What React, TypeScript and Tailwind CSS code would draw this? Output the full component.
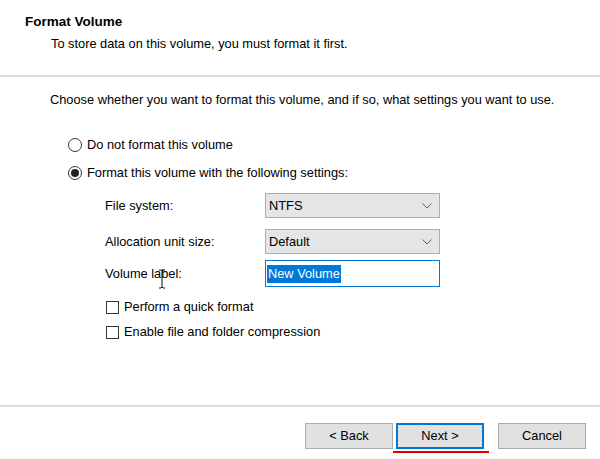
import { ReactNode } from "react";

const FONT = "font-['Liberation_Sans',Arial,sans-serif]";

const Chevron = () => (
  <svg width="10" height="6" viewBox="0 0 10 6" className="text-[#606060]">
    <path d="M0.5 0.5 L5 5 L9.5 0.5" fill="none" stroke="currentColor" strokeWidth="1" />
  </svg>
);

const Radio = ({ checked, label }: { checked?: boolean; label: string }) => (
  <div className="flex items-center h-4">
    <span className="w-[14px] h-[14px] rounded-full border border-[#333] bg-white flex items-center justify-center">
      {checked && <span className="w-[8px] h-[8px] rounded-full bg-[#222]" />}
    </span>
    <span className="ml-[5px]">{label}</span>
  </div>
);

const Checkbox = ({ label }: { label: string }) => (
  <div className="flex items-center h-4">
    <span className="w-[13px] h-[13px] border border-[#333] bg-white" />
    <span className="ml-[5px]">{label}</span>
  </div>
);

const Combo = ({ value }: { value: string }) => (
  <div className="w-[175px] h-[25px] border border-[#adadad] bg-[#e5e5e5] flex items-center justify-between pl-[3px] pr-[7px]">
    <span>{value}</span>
    <Chevron />
  </div>
);

const Row = ({ label, children }: { label: string; children: ReactNode }) => (
  <div className="flex items-center">
    <span className="w-[160px]">{label}</span>
    {children}
  </div>
);

const Button = ({ children, primary }: { children: ReactNode; primary?: boolean }) => (
  <div
    className={
      "w-[88px] h-[26px] flex items-center justify-center bg-[#e1e1e1] " +
      (primary ? "border-2 border-[#0078d7]" : "border border-[#adadad]")
    }
  >
    {children}
  </div>
);

export default function App() {
  return (
    <div className={`${FONT} w-[600px] h-[459px] bg-white text-[12.8px] text-black flex flex-col overflow-hidden`}>
      {/* HEADER */}
      <div className="h-[75px] pt-[14px] pl-[25px] leading-4">
        <div className="font-bold text-[13.5px]">Format Volume</div>
        <div className="pl-[26px] mt-[6px]">To store data on this volume, you must format it first.</div>
      </div>
      <div className="h-[2px] bg-[#dcdcdc]" />

      {/* BODY */}
      <div className="flex-1 pl-[50px] pt-[15px] leading-4 relative">
        <div>Choose whether you want to format this volume, and if so, what settings you want to use.</div>
        <div className="pl-[18px] mt-[29px] flex flex-col gap-[12px]">
          <Radio label="Do not format this volume" />
          <Radio checked label="Format this volume with the following settings:" />
        </div>
        <div className="pl-[55px] mt-[12px] flex flex-col">
          <Row label="File system:">
            <Combo value="NTFS" />
          </Row>
          <div className="mt-[11px]">
            <Row label="Allocation unit size:">
              <Combo value="Default" />
            </Row>
          </div>
          <div className="mt-[6px]">
            <Row label="Volume label:">
              <div className="w-[175px] h-[27px] border border-[#0078d7] bg-white flex items-center pl-[1px]">
                <span className="bg-[#0078d7] text-white px-[1px] leading-[18px]">New Volume</span>
              </div>
            </Row>
          </div>
          <div className="pl-px mt-[12px] flex flex-col gap-[9px]">
            <Checkbox label="Perform a quick format" />
            <Checkbox label="Enable file and folder compression" />
          </div>
        </div>
        {/* I-beam cursor */}
        <svg className="absolute left-[157px] top-[192px]" width="10" height="20" viewBox="0 0 10 20">
          <path d="M2 1 H4 L5 2 L6 1 H8 M5 2 V18 M2 19 H4 L5 18 L6 19 H8" fill="none" stroke="#111" strokeWidth="1" />
        </svg>
      </div>

      {/* FOOTER */}
      <div className="h-[2px] bg-[#dcdcdc]" />
      <div className="h-[52px] flex items-start pt-[16px] pl-[305px]">
        <Button>&lt; Back</Button>
        <div className="relative ml-[3px]">
          <Button primary>Next &gt;</Button>
          <div className="absolute -left-[3px] -right-[5px] top-full mt-[2px] h-[2px] bg-[#e00000]" />
        </div>
        <div className="ml-[14px]">
          <Button>Cancel</Button>
        </div>
      </div>
    </div>
  );
}
